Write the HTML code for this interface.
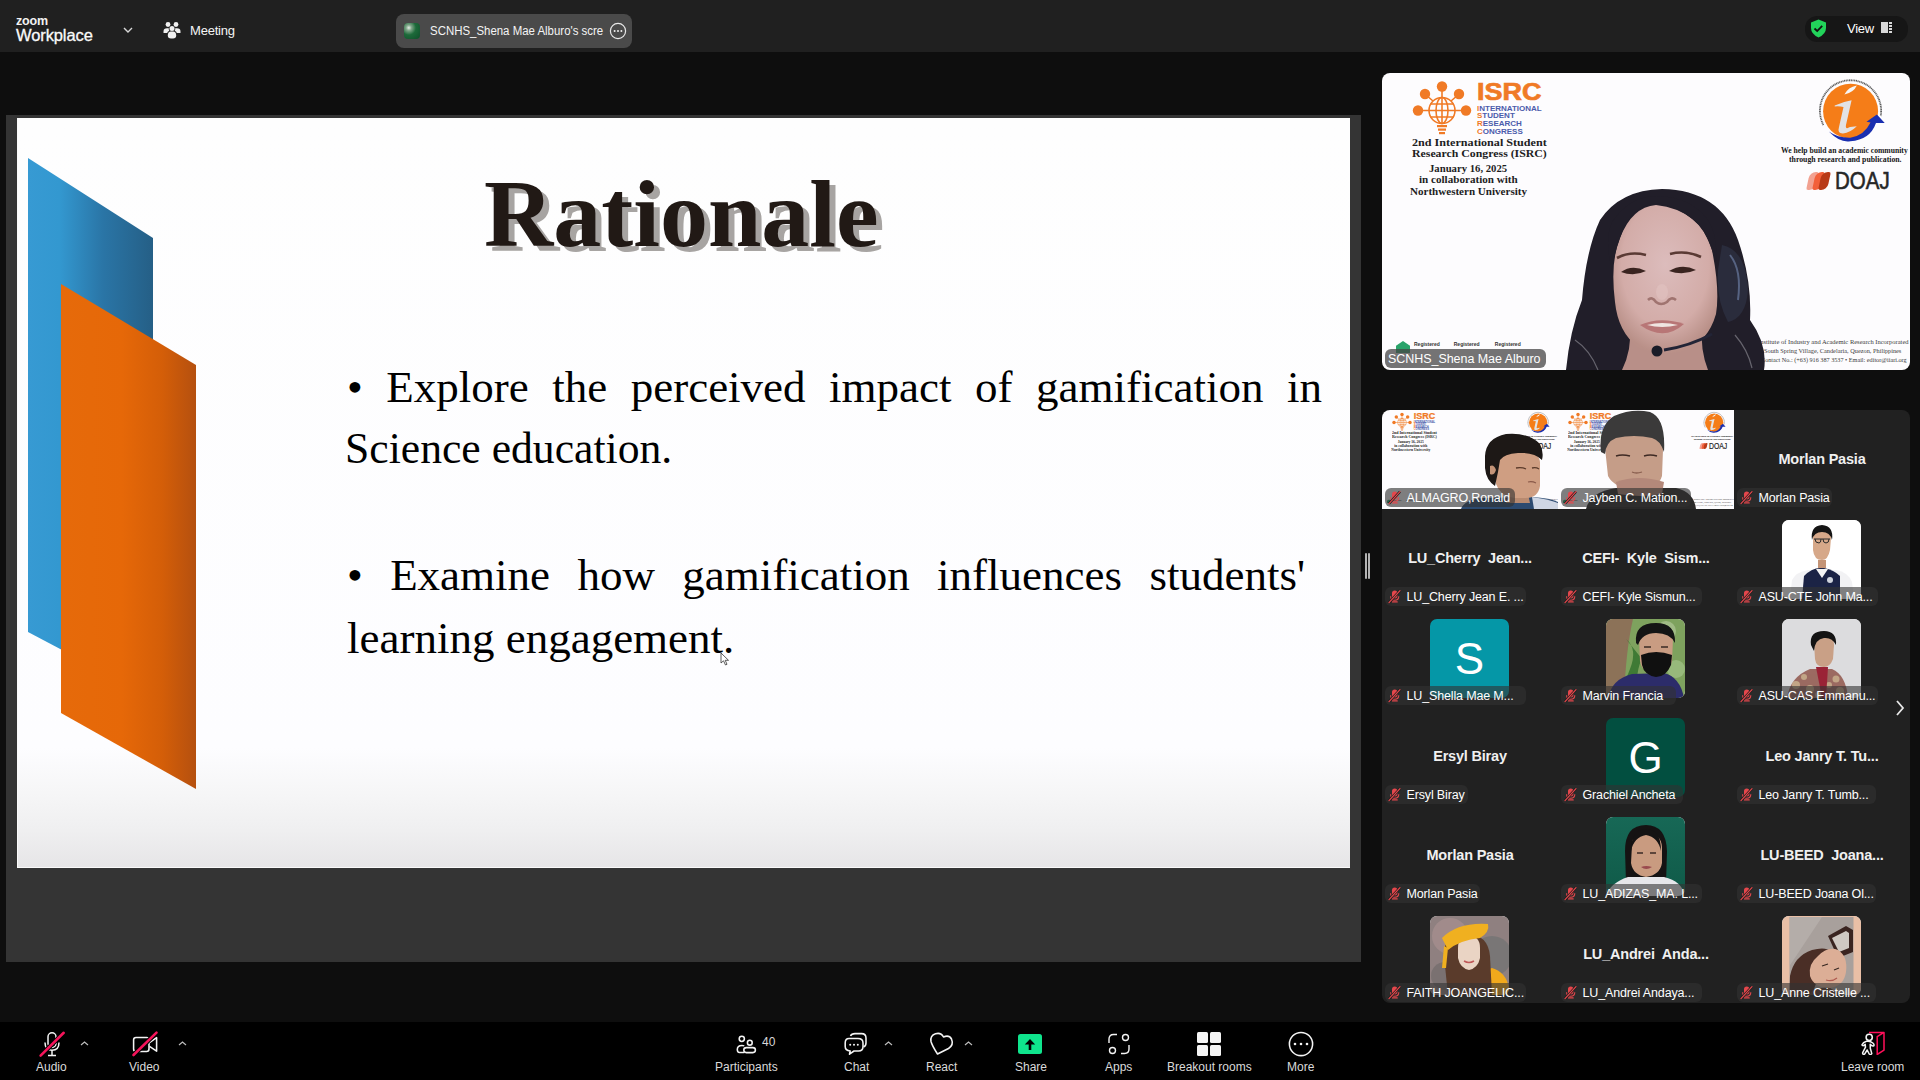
<!DOCTYPE html>
<html><head><meta charset="utf-8">
<style>
*{margin:0;padding:0;box-sizing:border-box}
html,body{width:1920px;height:1080px;overflow:hidden;background:#0e0e0e;font-family:"Liberation Sans",sans-serif;color:#fff}
.abs{position:absolute}
#top{left:0;top:0;width:1920px;height:52px;background:#202020}
#frame{left:6px;top:115px;width:1355px;height:847px;background:#343434}
#slide{left:17px;top:118px;width:1333px;height:750px;background:linear-gradient(to bottom,#fefefe 0%,#fdfdff 84%,#f6f6f7 90%,#efeff0 95%,#e6e5e7 100%);overflow:hidden;box-shadow:inset 0 -1px 0 #fafafa,inset 1px 0 0 #fafafa}
#spk{left:1382px;top:73px;width:528px;height:297px;background:#fdfcfe;border-radius:8px;overflow:hidden}
#grid{left:1382px;top:410px;width:528px;height:593px;background:#212121;border-radius:8px;overflow:hidden}
#bar{left:0;top:1022px;width:1920px;height:58px;background:#000}
.t1{left:467px;top:48px;font:bold 96px/96px "Liberation Serif",serif;color:#211915;text-shadow:6px 5px 0 #a7a4a2;white-space:nowrap}
.ln{left:330px;font:45px/45px "Liberation Serif",serif;color:#000;white-space:nowrap;text-align:justify;text-align-last:justify}
.l2{white-space:nowrap;text-align:left;text-align-last:left}
.ui{font-family:"Liberation Sans",sans-serif;color:#f4f4f4;line-height:16px;white-space:nowrap}
.lbl{top:38px;font:12px/14px "Liberation Sans",sans-serif;color:#dadada;white-space:nowrap}
/*gridcss*/.tile{width:176px;height:99px;overflow:hidden}
.bdsm{left:0;top:0;width:528px;height:297px;background:#fdfcfe;transform:scale(0.33333);transform-origin:0 0}
.nm{font:12.5px/16px "Liberation Sans",sans-serif;color:#fff;white-space:nowrap;letter-spacing:-0.15px}
.bn{left:0;top:39px;width:176px;text-align:center;font:bold 14.5px/20px "Liberation Sans",sans-serif;letter-spacing:-0.2px;color:#f0f0f0;white-space:nowrap}
.ph{left:48px;top:10.5px;width:79px;height:79px;border-radius:7px;overflow:hidden}
.av{left:0;top:0;width:79px;height:79px;text-align:center;font:44px/79px "Liberation Sans",sans-serif;color:#fff}
/*/gridcss*/</style></head>
<body>
<div id="top" class="abs">
<div class="abs" style="left:16px;top:14px;font:bold 12.5px/14px 'Liberation Sans',sans-serif;letter-spacing:-0.2px;color:#f2f2f2">zoom</div>
<div class="abs" style="left:16px;top:25px;font:16.5px/20px 'Liberation Sans',sans-serif;color:#fafafa;letter-spacing:-0.1px;-webkit-text-stroke:0.3px #fafafa">Workplace</div>
<svg class="abs" style="left:122px;top:25px" width="12" height="10" viewBox="0 0 12 10"><path d="M2 3 L6 7 L10 3" stroke="#d8d8d8" stroke-width="1.4" fill="none"/></svg>
<svg class="abs" style="left:162px;top:20px" width="20" height="20" viewBox="0 0 20 20" fill="#f0f0f0">
<circle cx="6" cy="4.5" r="2.4"/><circle cx="14" cy="4.5" r="2.4"/><circle cx="10" cy="8.6" r="2.5"/>
<path d="M1.5 11.5 Q1.5 8.2 5 8.2 L6.8 8.2 Q6.5 9.5 7.3 10.8 Q5.4 11.6 5.2 13 L1.5 13 Z"/>
<path d="M18.5 11.5 Q18.5 8.2 15 8.2 L13.2 8.2 Q13.5 9.5 12.7 10.8 Q14.6 11.6 14.8 13 L18.5 13 Z"/>
<path d="M5.8 15.5 Q5.8 11.6 9 11.6 L11 11.6 Q14.2 11.6 14.2 15.5 Q14.2 18.5 11 18.5 L9 18.5 Q5.8 18.5 5.8 15.5 Z"/>
</svg>
<div class="abs ui" style="left:190px;top:23px;font-size:13px;letter-spacing:-0.2px">Meeting</div>
<div class="abs" style="left:396px;top:14px;width:236px;height:34px;background:#4a4a4a;border-radius:8px">
<div class="abs" style="left:8px;top:9px;width:16px;height:16px;border-radius:4px;background:radial-gradient(circle at 30% 30%,#e8efe8 0,#7da487 18%,#1d6a3a 45%,#0f4f2a 100%)"></div>
<div class="abs ui" style="left:34px;top:9px;font-size:12.5px;transform:scaleX(0.915);transform-origin:0 0;white-space:nowrap">SCNHS_Shena Mae Alburo's scre</div>
<svg class="abs" style="left:213px;top:8px" width="18" height="18" viewBox="0 0 18 18"><circle cx="9" cy="9" r="7.6" stroke="#e8e8e8" stroke-width="1.2" fill="none"/><circle cx="5.6" cy="9" r="1" fill="#eee"/><circle cx="9" cy="9" r="1" fill="#eee"/><circle cx="12.4" cy="9" r="1" fill="#eee"/></svg>
</div>
<div class="abs" style="left:1805px;top:16px;width:103px;height:26px;background:#161616;border-radius:12px">
<svg class="abs" style="left:5px;top:3px" width="17" height="19" viewBox="0 0 17 19"><path d="M8.5 0.5 L16 3.5 L16 9 Q16 15 8.5 18.5 Q1 15 1 9 L1 3.5 Z" fill="#22d35a"/><path d="M4.5 9.5 L7.2 12 L12.2 6.8" stroke="#111" stroke-width="1.8" fill="none"/></svg>
<div class="abs ui" style="left:42px;top:5px;font-size:13px;letter-spacing:-0.3px;color:#fff">View</div>
<div class="abs" style="left:76px;top:6px;width:7px;height:11px;background:#d8d8d8"></div>
<div class="abs" style="left:84px;top:6px;width:3px;height:11px;background:repeating-linear-gradient(#d8d8d8 0 2px,#161616 2px 3px)"></div>
</div>
</div>
<div id="frame" class="abs"></div>
<div id="slide" class="abs">
<svg class="abs" style="left:0;top:0" width="1333" height="750" viewBox="0 0 1333 750">
<defs>
<linearGradient id="gb" x1="0" x2="1" y1="0" y2="0"><stop offset="0" stop-color="#379ad3"/><stop offset="0.25" stop-color="#3398d0"/><stop offset="0.6" stop-color="#2a75a6"/><stop offset="1" stop-color="#255f86"/></linearGradient>
<linearGradient id="go" x1="0" x2="1" y1="0" y2="0"><stop offset="0" stop-color="#e66a0a"/><stop offset="0.45" stop-color="#e66808"/><stop offset="0.75" stop-color="#d45e08"/><stop offset="1" stop-color="#b5500f"/></linearGradient>
</defs>
<polygon points="11,40 136,120 136,580 11,514" fill="url(#gb)"/>
<polygon points="44,166 179,247 179,671 44,595" fill="url(#go)"/>
</svg>
<div class="abs t1">Rationale</div>
<div class="abs ln" style="top:247px;width:975px">&bull; Explore the perceived impact of gamification in</div>
<div class="abs ln l2" style="top:308px;left:328px;transform:scaleX(0.97);transform-origin:0 0">Science education.</div>
<div class="abs ln" style="top:435px;width:958px">&bull; Examine how gamification influences students'</div>
<div class="abs ln l2" style="top:498px">learning engagement.</div>
</div>
<div class="abs" style="left:1365px;top:553px;width:1.6px;height:26px;background:#b4b4b4;border-radius:1px"></div>
<div class="abs" style="left:1368px;top:553px;width:1.6px;height:26px;background:#b4b4b4;border-radius:1px"></div>
<svg class="abs" style="left:720px;top:652px" width="10" height="14" viewBox="0 0 10 14"><path d="M1 1 L1 11 L3.5 8.8 L5.5 13 L7 12.3 L5.2 8.3 L8.5 8.3 Z" fill="#fff" stroke="#333" stroke-width="0.8"/></svg>
<div id="spk" class="abs"><svg class="abs" style="left:29px;top:7px" width="62" height="56" viewBox="0 0 62 56">
<g stroke="#f07a26" stroke-width="1.6" fill="none">
<circle cx="31" cy="30.5" r="13"/>
<ellipse cx="31" cy="30.5" rx="6" ry="13"/>
<path d="M31 17.5 L31 43.5 M18 30.5 L44 30.5 M19.5 24 L42.5 24 M19.5 37 L42.5 37"/>
<path d="M31 17.5 L31 8 M22 21 L15 15 M40 21 L47 15 M18 30.5 L8 30.5 M44 30.5 L54 30.5"/>
</g>
<g fill="#f07a26">
<circle cx="31" cy="6.5" r="5.2"/><circle cx="14" cy="14" r="5.2"/><circle cx="48" cy="14" r="5.2"/>
<circle cx="7" cy="30.5" r="5.2"/><circle cx="55" cy="30.5" r="5.2"/>
<rect x="26" y="45" width="10" height="2.2"/><rect x="27" y="48.5" width="8" height="2.2"/><rect x="28" y="52" width="6" height="2.2"/>
</g></svg><div class="abs" style="left:94.5px;top:7.3px;font:bold 24.5px/24px 'Liberation Sans',sans-serif;color:#f07a26;-webkit-text-stroke:0.7px #f07a26;transform:scaleX(1.1);transform-origin:0 0">ISRC</div><div class="abs" style="left:95px;top:31.5px;font:bold 8px/8px 'Liberation Sans',sans-serif;color:#4b5bab;white-space:nowrap"><span style="color:#f07a26">I</span>NTERNATIONAL</div><div class="abs" style="left:95px;top:39.2px;font:bold 8px/8px 'Liberation Sans',sans-serif;color:#4b5bab;white-space:nowrap"><span style="color:#f07a26">S</span>TUDENT</div><div class="abs" style="left:95px;top:46.9px;font:bold 8px/8px 'Liberation Sans',sans-serif;color:#4b5bab;white-space:nowrap"><span style="color:#f07a26">R</span>ESEARCH</div><div class="abs" style="left:95px;top:54.6px;font:bold 8px/8px 'Liberation Sans',sans-serif;color:#4b5bab;white-space:nowrap"><span style="color:#f07a26">C</span>ONGRESS</div><div class="abs" style="left:29.5px;top:65px;font:bold 10.2px/10.2px 'Liberation Serif',serif;color:#1e1e1e;white-space:nowrap;transform:scaleX(1.19);transform-origin:0 0">2nd International Student</div><div class="abs" style="left:30px;top:76px;font:bold 10.2px/10.2px 'Liberation Serif',serif;color:#1e1e1e;white-space:nowrap;transform:scaleX(1.16);transform-origin:0 0">Research Congress (ISRC)</div><div class="abs" style="left:46.5px;top:91px;font:bold 10.2px/10.2px 'Liberation Serif',serif;color:#1e1e1e;white-space:nowrap;transform:scaleX(1.05);transform-origin:0 0">January 16, 2025</div><div class="abs" style="left:36.5px;top:102px;font:bold 10.2px/10.2px 'Liberation Serif',serif;color:#1e1e1e;white-space:nowrap;transform:scaleX(1.09);transform-origin:0 0">in collaboration with</div><div class="abs" style="left:27.5px;top:113.8px;font:bold 10.2px/10.2px 'Liberation Serif',serif;color:#1e1e1e;white-space:nowrap;transform:scaleX(1.085);transform-origin:0 0">Northwestern University</div><svg class="abs" style="left:428px;top:2px" width="90" height="76" viewBox="0 0 90 76">
<path d="M13.4 50 A30.6 30.6 0 1 1 70.7 41" stroke="#5a5a5a" stroke-width="1.8" stroke-dasharray="1.1 0.6" fill="none"/>
<circle cx="40.6" cy="36.2" r="27.5" fill="#f57d18"/>
<path d="M18.8 56.5 Q30 68 40.3 66.2 Q60 65 66 48 L74.7 48 L66.9 39.6 L56.5 46.8 L60.5 47.6 Q54 61 40.3 62.7 Q28 63 18.8 56.5 Z" fill="#1a2fb0"/>
<path d="M24.7 30.5 Q32 27 41.6 25.3 L36 50 Q35 55 40 52 L46.8 51.3 Q40 58 33 58.4 Q27 58.6 29 52 L33.5 32 Q29 31 24.7 31.5 Z" fill="#e2e2e4"/>
<path d="M34.4 19.5 Q38 12 46.8 10.4 Q44 17 34.4 19.5 Z" fill="#f6f6f6"/>
</svg><div class="abs" style="left:399px;top:74px;font:bold 8px/8px 'Liberation Serif',serif;color:#161616;white-space:nowrap;transform:scaleX(0.955);transform-origin:0 0">We help build an academic community</div><div class="abs" style="left:406.5px;top:83px;font:bold 8px/8px 'Liberation Serif',serif;color:#161616;white-space:nowrap;transform:scaleX(0.97);transform-origin:0 0">through research and publication.</div><div class="abs" style="left:425.7px;top:99px;width:22px;height:18px">
<div class="abs" style="left:0;top:0;width:9px;height:18px;background:#f2a191;border-radius:6px 2px 6px 2px;transform:skewX(-12deg)"></div>
<div class="abs" style="left:6px;top:0;width:9px;height:18px;background:#f25f3a;border-radius:6px 2px 6px 2px;transform:skewX(-12deg)"></div>
<div class="abs" style="left:12px;top:0;width:9px;height:18px;background:#b83a18;border-radius:6px 2px 6px 2px;transform:skewX(-12deg)"></div>
</div>
<div class="abs" style="left:453px;top:95px;font:24.4px/26px 'Liberation Sans',sans-serif;color:#262626;-webkit-text-stroke:0.6px #262626;transform:scaleX(0.84);transform-origin:0 0">DOAJ</div><div class="abs" style="left:376px;top:264.5px;font:6.5px/7px 'Liberation Serif',serif;color:#3a3a3a;white-space:nowrap">Institute of Industry and Academic Research Incorporated</div><div class="abs" style="left:382px;top:273.5px;font:6.3px/7px 'Liberation Serif',serif;color:#3a3a3a;white-space:nowrap">South Spring Village, Candelaria, Quezon, Philippines</div><div class="abs" style="left:379px;top:282.5px;font:6.2px/7px 'Liberation Serif',serif;color:#3a3a3a;white-space:nowrap">Contact No.: (+63) 916 387 3537 &bull; Email: editor@iiari.org</div><div class="abs" style="left:14px;top:268px;width:14px;height:12px;background:#2aa36a;clip-path:polygon(50% 0,100% 40%,100% 100%,0 100%,0 40%)"></div>
<div class="abs" style="left:32px;top:269px;font:bold 5px/5px 'Liberation Sans',sans-serif;color:#333;white-space:nowrap">Registered&nbsp;&nbsp;&nbsp;&nbsp;&nbsp;&nbsp;&nbsp;&nbsp;&nbsp;&nbsp;Registered&nbsp;&nbsp;&nbsp;&nbsp;&nbsp;&nbsp;&nbsp;&nbsp;&nbsp;&nbsp;&nbsp;Registered</div><svg class="abs" style="left:0;top:0" width="528" height="297" viewBox="1382 73 528 297">
<defs>
<radialGradient id="skin" cx="0.5" cy="0.4" r="0.6"><stop offset="0" stop-color="#dcbcbc"/><stop offset="0.7" stop-color="#d3aca8"/><stop offset="1" stop-color="#b99088"/></radialGradient>
</defs>
<!-- hair back mass -->
<path d="M1662 189 Q1720 190 1738 240 Q1752 280 1750 320 Q1768 345 1764 370 L1566 370 Q1570 330 1582 300 Q1586 250 1600 220 Q1620 190 1662 189 Z" fill="#211e29"/>
<!-- neck -->
<path d="M1630 325 L1702 325 Q1700 350 1708 370 L1622 370 Q1632 350 1630 325 Z" fill="#b88f88"/>
<!-- face -->
<path d="M1656 205 Q1700 210 1712 250 Q1720 290 1716 314 Q1708 342 1684 351 Q1660 357 1638 347 Q1618 332 1615 302 Q1610 262 1620 238 Q1632 207 1656 205 Z" fill="url(#skin)"/>
<!-- hair front fringe over forehead sides -->
<path d="M1656 203 Q1630 206 1620 238 Q1614 255 1612 270 Q1604 240 1612 222 Q1630 196 1656 196 Q1690 196 1708 220 Q1718 236 1716 262 Q1708 236 1700 226 Q1680 206 1656 203 Z" fill="#211e29"/>
<!-- headset right -->
<path d="M1722 245 Q1746 250 1748 290 Q1746 318 1728 322 Q1716 300 1718 270 Z" fill="#2a2c3c"/>
<path d="M1730 255 Q1742 270 1738 300" stroke="#6a7aa0" stroke-width="2" fill="none" opacity="0.7"/>
<!-- brows -->
<path d="M1617 258 Q1630 251 1646 255" stroke="#5a3a34" stroke-width="2.6" fill="none"/>
<path d="M1670 254 Q1686 250 1701 257" stroke="#5a3a34" stroke-width="2.6" fill="none"/>
<!-- eyes -->
<path d="M1621 272 Q1632 264 1646 271 Q1634 277 1621 272 Z" fill="#3a2420"/>
<path d="M1669 271 Q1682 263 1696 270 Q1683 276 1669 271 Z" fill="#3a2420"/>
<!-- nose -->
<path d="M1648 300 Q1652 296 1656 302 Q1661 306 1667 302 Q1671 296 1676 300" stroke="#a07470" stroke-width="2.6" fill="none"/><ellipse cx="1662" cy="292" rx="6" ry="8" fill="#e4c6c4" opacity="0.5"/>
<!-- mouth -->
<path d="M1640 325 Q1660 316 1684 324 Q1664 342 1640 325 Z" fill="#b87676"/>
<path d="M1647 325 Q1662 321 1678 325 Q1662 329 1647 325 Z" fill="#efe4e0"/>
<!-- mic -->
<path d="M1664 350 Q1690 346 1712 334" stroke="#222436" stroke-width="3" fill="none"/>
<circle cx="1657" cy="351" r="5.5" fill="#1a1c28"/>
<!-- hair strands highlights bottom -->
<path d="M1575 340 Q1590 350 1598 370" stroke="#e8e8ef" stroke-width="1.2" fill="none" opacity="0.35"/>
<path d="M1735 335 Q1748 350 1752 368" stroke="#e8e8ef" stroke-width="1.2" fill="none" opacity="0.35"/>
</svg><div class="abs" style="left:3px;top:275.5px;width:161px;height:19.5px;border-radius:6px;background:rgba(70,70,70,0.75)"></div>
<div class="abs nm" style="left:6px;top:277.5px;letter-spacing:-0.05px">SCNHS_Shena Mae Alburo</div></div><!--/spk-->
<div id="grid" class="abs"><div class="abs tile" style="left:0px;top:0px"><div class="abs bdsm"><svg class="abs" style="left:29px;top:7px" width="62" height="56" viewBox="0 0 62 56">
<g stroke="#f07a26" stroke-width="1.6" fill="none">
<circle cx="31" cy="30.5" r="13"/>
<ellipse cx="31" cy="30.5" rx="6" ry="13"/>
<path d="M31 17.5 L31 43.5 M18 30.5 L44 30.5 M19.5 24 L42.5 24 M19.5 37 L42.5 37"/>
<path d="M31 17.5 L31 8 M22 21 L15 15 M40 21 L47 15 M18 30.5 L8 30.5 M44 30.5 L54 30.5"/>
</g>
<g fill="#f07a26">
<circle cx="31" cy="6.5" r="5.2"/><circle cx="14" cy="14" r="5.2"/><circle cx="48" cy="14" r="5.2"/>
<circle cx="7" cy="30.5" r="5.2"/><circle cx="55" cy="30.5" r="5.2"/>
<rect x="26" y="45" width="10" height="2.2"/><rect x="27" y="48.5" width="8" height="2.2"/><rect x="28" y="52" width="6" height="2.2"/>
</g></svg><div class="abs" style="left:94.5px;top:7.3px;font:bold 24.5px/24px 'Liberation Sans',sans-serif;color:#f07a26;-webkit-text-stroke:0.7px #f07a26;transform:scaleX(1.1);transform-origin:0 0">ISRC</div><div class="abs" style="left:95px;top:31.5px;font:bold 8px/8px 'Liberation Sans',sans-serif;color:#4b5bab;white-space:nowrap"><span style="color:#f07a26">I</span>NTERNATIONAL</div><div class="abs" style="left:95px;top:39.2px;font:bold 8px/8px 'Liberation Sans',sans-serif;color:#4b5bab;white-space:nowrap"><span style="color:#f07a26">S</span>TUDENT</div><div class="abs" style="left:95px;top:46.9px;font:bold 8px/8px 'Liberation Sans',sans-serif;color:#4b5bab;white-space:nowrap"><span style="color:#f07a26">R</span>ESEARCH</div><div class="abs" style="left:95px;top:54.6px;font:bold 8px/8px 'Liberation Sans',sans-serif;color:#4b5bab;white-space:nowrap"><span style="color:#f07a26">C</span>ONGRESS</div><div class="abs" style="left:29.5px;top:65px;font:bold 10.2px/10.2px 'Liberation Serif',serif;color:#1e1e1e;white-space:nowrap;transform:scaleX(1.19);transform-origin:0 0">2nd International Student</div><div class="abs" style="left:30px;top:76px;font:bold 10.2px/10.2px 'Liberation Serif',serif;color:#1e1e1e;white-space:nowrap;transform:scaleX(1.16);transform-origin:0 0">Research Congress (ISRC)</div><div class="abs" style="left:46.5px;top:91px;font:bold 10.2px/10.2px 'Liberation Serif',serif;color:#1e1e1e;white-space:nowrap;transform:scaleX(1.05);transform-origin:0 0">January 16, 2025</div><div class="abs" style="left:36.5px;top:102px;font:bold 10.2px/10.2px 'Liberation Serif',serif;color:#1e1e1e;white-space:nowrap;transform:scaleX(1.09);transform-origin:0 0">in collaboration with</div><div class="abs" style="left:27.5px;top:113.8px;font:bold 10.2px/10.2px 'Liberation Serif',serif;color:#1e1e1e;white-space:nowrap;transform:scaleX(1.085);transform-origin:0 0">Northwestern University</div><svg class="abs" style="left:428px;top:2px" width="90" height="76" viewBox="0 0 90 76">
<path d="M13.4 50 A30.6 30.6 0 1 1 70.7 41" stroke="#5a5a5a" stroke-width="1.8" stroke-dasharray="1.1 0.6" fill="none"/>
<circle cx="40.6" cy="36.2" r="27.5" fill="#f57d18"/>
<path d="M18.8 56.5 Q30 68 40.3 66.2 Q60 65 66 48 L74.7 48 L66.9 39.6 L56.5 46.8 L60.5 47.6 Q54 61 40.3 62.7 Q28 63 18.8 56.5 Z" fill="#1a2fb0"/>
<path d="M24.7 30.5 Q32 27 41.6 25.3 L36 50 Q35 55 40 52 L46.8 51.3 Q40 58 33 58.4 Q27 58.6 29 52 L33.5 32 Q29 31 24.7 31.5 Z" fill="#e2e2e4"/>
<path d="M34.4 19.5 Q38 12 46.8 10.4 Q44 17 34.4 19.5 Z" fill="#f6f6f6"/>
</svg><div class="abs" style="left:399px;top:74px;font:bold 8px/8px 'Liberation Serif',serif;color:#161616;white-space:nowrap;transform:scaleX(0.955);transform-origin:0 0">We help build an academic community</div><div class="abs" style="left:406.5px;top:83px;font:bold 8px/8px 'Liberation Serif',serif;color:#161616;white-space:nowrap;transform:scaleX(0.97);transform-origin:0 0">through research and publication.</div><div class="abs" style="left:425.7px;top:99px;width:22px;height:18px">
<div class="abs" style="left:0;top:0;width:9px;height:18px;background:#f2a191;border-radius:6px 2px 6px 2px;transform:skewX(-12deg)"></div>
<div class="abs" style="left:6px;top:0;width:9px;height:18px;background:#f25f3a;border-radius:6px 2px 6px 2px;transform:skewX(-12deg)"></div>
<div class="abs" style="left:12px;top:0;width:9px;height:18px;background:#b83a18;border-radius:6px 2px 6px 2px;transform:skewX(-12deg)"></div>
</div>
<div class="abs" style="left:453px;top:95px;font:24.4px/26px 'Liberation Sans',sans-serif;color:#262626;-webkit-text-stroke:0.6px #262626;transform:scaleX(0.84);transform-origin:0 0">DOAJ</div><div class="abs" style="left:376px;top:264.5px;font:6.5px/7px 'Liberation Serif',serif;color:#3a3a3a;white-space:nowrap">Institute of Industry and Academic Research Incorporated</div><div class="abs" style="left:382px;top:273.5px;font:6.3px/7px 'Liberation Serif',serif;color:#3a3a3a;white-space:nowrap">South Spring Village, Candelaria, Quezon, Philippines</div><div class="abs" style="left:379px;top:282.5px;font:6.2px/7px 'Liberation Serif',serif;color:#3a3a3a;white-space:nowrap">Contact No.: (+63) 916 387 3537 &bull; Email: editor@iiari.org</div><div class="abs" style="left:14px;top:268px;width:14px;height:12px;background:#2aa36a;clip-path:polygon(50% 0,100% 40%,100% 100%,0 100%,0 40%)"></div>
<div class="abs" style="left:32px;top:269px;font:bold 5px/5px 'Liberation Sans',sans-serif;color:#333;white-space:nowrap">Registered&nbsp;&nbsp;&nbsp;&nbsp;&nbsp;&nbsp;&nbsp;&nbsp;&nbsp;&nbsp;Registered&nbsp;&nbsp;&nbsp;&nbsp;&nbsp;&nbsp;&nbsp;&nbsp;&nbsp;&nbsp;&nbsp;Registered</div></div><svg class="abs" style="left:0;top:0" width="176" height="99" viewBox="0 0 176 99">
<path d="M79 99 Q82 90 100 88 L150 87 Q168 88 176 92 L176 99 Z" fill="#2c4a70"/>
<path d="M150 87 Q166 89 176 93 L176 99 L152 99 Z" fill="#cfd6e4"/>
<path d="M126 84 L146 84 L148 93 L124 93 Z" fill="#b88a70"/>
<path d="M113 52 Q113 40 130 39 Q156 38 158 52 L158 76 Q156 88 144 88 L132 88 Q118 86 114 74 Z" fill="#cf9e82"/>
<path d="M103 46 Q104 28 124 24 Q146 22 158 34 Q162 42 160 50 Q152 42 136 43 Q122 44 118 50 L116 62 L113 76 Q104 70 103 58 Z" fill="#1d1816"/>
<path d="M108 56 Q112 54 114 60 Q112 66 108 64 Z" fill="#c49478"/>
<path d="M134 58 Q140 57 144 59 M150 58 Q154 57 157 59" stroke="#5a3a2a" stroke-width="1.3" fill="none"/>
<path d="M146 72 Q150 71 154 73" stroke="#8a5a4a" stroke-width="1.1" fill="none"/>
</svg><div class="abs" style="left:3px;top:77.5px;width:130px;height:19.5px;border-radius:6px;background:rgba(48,48,48,0.62)">
<svg class="abs" style="left:2px;top:2.5px" width="15" height="15" viewBox="0 0 15 15">
<rect x="5" y="1.5" width="5.4" height="8" rx="2.7" fill="#e5474c"/>
<path d="M3.6 7.2 Q3.6 11.2 7.7 11.2 Q11.8 11.2 11.8 7.2" stroke="#e5474c" stroke-width="1.1" fill="none"/>
<rect x="4.8" y="12.2" width="6" height="1.4" rx="0.7" fill="#e5474c"/>
<path d="M2 13.6 L13 1.6" stroke="#1c1c1c" stroke-width="2.4"/>
<path d="M2 13.6 L13 1.6" stroke="#e5474c" stroke-width="1.2" stroke-linecap="round"/>
</svg>
<div class="abs nm" style="left:21.5px;top:2px">ALMAGRO,Ronald</div>
</div></div><div class="abs tile" style="left:176px;top:0px"><div class="abs bdsm"><svg class="abs" style="left:29px;top:7px" width="62" height="56" viewBox="0 0 62 56">
<g stroke="#f07a26" stroke-width="1.6" fill="none">
<circle cx="31" cy="30.5" r="13"/>
<ellipse cx="31" cy="30.5" rx="6" ry="13"/>
<path d="M31 17.5 L31 43.5 M18 30.5 L44 30.5 M19.5 24 L42.5 24 M19.5 37 L42.5 37"/>
<path d="M31 17.5 L31 8 M22 21 L15 15 M40 21 L47 15 M18 30.5 L8 30.5 M44 30.5 L54 30.5"/>
</g>
<g fill="#f07a26">
<circle cx="31" cy="6.5" r="5.2"/><circle cx="14" cy="14" r="5.2"/><circle cx="48" cy="14" r="5.2"/>
<circle cx="7" cy="30.5" r="5.2"/><circle cx="55" cy="30.5" r="5.2"/>
<rect x="26" y="45" width="10" height="2.2"/><rect x="27" y="48.5" width="8" height="2.2"/><rect x="28" y="52" width="6" height="2.2"/>
</g></svg><div class="abs" style="left:94.5px;top:7.3px;font:bold 24.5px/24px 'Liberation Sans',sans-serif;color:#f07a26;-webkit-text-stroke:0.7px #f07a26;transform:scaleX(1.1);transform-origin:0 0">ISRC</div><div class="abs" style="left:95px;top:31.5px;font:bold 8px/8px 'Liberation Sans',sans-serif;color:#4b5bab;white-space:nowrap"><span style="color:#f07a26">I</span>NTERNATIONAL</div><div class="abs" style="left:95px;top:39.2px;font:bold 8px/8px 'Liberation Sans',sans-serif;color:#4b5bab;white-space:nowrap"><span style="color:#f07a26">S</span>TUDENT</div><div class="abs" style="left:95px;top:46.9px;font:bold 8px/8px 'Liberation Sans',sans-serif;color:#4b5bab;white-space:nowrap"><span style="color:#f07a26">R</span>ESEARCH</div><div class="abs" style="left:95px;top:54.6px;font:bold 8px/8px 'Liberation Sans',sans-serif;color:#4b5bab;white-space:nowrap"><span style="color:#f07a26">C</span>ONGRESS</div><div class="abs" style="left:29.5px;top:65px;font:bold 10.2px/10.2px 'Liberation Serif',serif;color:#1e1e1e;white-space:nowrap;transform:scaleX(1.19);transform-origin:0 0">2nd International Student</div><div class="abs" style="left:30px;top:76px;font:bold 10.2px/10.2px 'Liberation Serif',serif;color:#1e1e1e;white-space:nowrap;transform:scaleX(1.16);transform-origin:0 0">Research Congress (ISRC)</div><div class="abs" style="left:46.5px;top:91px;font:bold 10.2px/10.2px 'Liberation Serif',serif;color:#1e1e1e;white-space:nowrap;transform:scaleX(1.05);transform-origin:0 0">January 16, 2025</div><div class="abs" style="left:36.5px;top:102px;font:bold 10.2px/10.2px 'Liberation Serif',serif;color:#1e1e1e;white-space:nowrap;transform:scaleX(1.09);transform-origin:0 0">in collaboration with</div><div class="abs" style="left:27.5px;top:113.8px;font:bold 10.2px/10.2px 'Liberation Serif',serif;color:#1e1e1e;white-space:nowrap;transform:scaleX(1.085);transform-origin:0 0">Northwestern University</div><svg class="abs" style="left:428px;top:2px" width="90" height="76" viewBox="0 0 90 76">
<path d="M13.4 50 A30.6 30.6 0 1 1 70.7 41" stroke="#5a5a5a" stroke-width="1.8" stroke-dasharray="1.1 0.6" fill="none"/>
<circle cx="40.6" cy="36.2" r="27.5" fill="#f57d18"/>
<path d="M18.8 56.5 Q30 68 40.3 66.2 Q60 65 66 48 L74.7 48 L66.9 39.6 L56.5 46.8 L60.5 47.6 Q54 61 40.3 62.7 Q28 63 18.8 56.5 Z" fill="#1a2fb0"/>
<path d="M24.7 30.5 Q32 27 41.6 25.3 L36 50 Q35 55 40 52 L46.8 51.3 Q40 58 33 58.4 Q27 58.6 29 52 L33.5 32 Q29 31 24.7 31.5 Z" fill="#e2e2e4"/>
<path d="M34.4 19.5 Q38 12 46.8 10.4 Q44 17 34.4 19.5 Z" fill="#f6f6f6"/>
</svg><div class="abs" style="left:399px;top:74px;font:bold 8px/8px 'Liberation Serif',serif;color:#161616;white-space:nowrap;transform:scaleX(0.955);transform-origin:0 0">We help build an academic community</div><div class="abs" style="left:406.5px;top:83px;font:bold 8px/8px 'Liberation Serif',serif;color:#161616;white-space:nowrap;transform:scaleX(0.97);transform-origin:0 0">through research and publication.</div><div class="abs" style="left:425.7px;top:99px;width:22px;height:18px">
<div class="abs" style="left:0;top:0;width:9px;height:18px;background:#f2a191;border-radius:6px 2px 6px 2px;transform:skewX(-12deg)"></div>
<div class="abs" style="left:6px;top:0;width:9px;height:18px;background:#f25f3a;border-radius:6px 2px 6px 2px;transform:skewX(-12deg)"></div>
<div class="abs" style="left:12px;top:0;width:9px;height:18px;background:#b83a18;border-radius:6px 2px 6px 2px;transform:skewX(-12deg)"></div>
</div>
<div class="abs" style="left:453px;top:95px;font:24.4px/26px 'Liberation Sans',sans-serif;color:#262626;-webkit-text-stroke:0.6px #262626;transform:scaleX(0.84);transform-origin:0 0">DOAJ</div><div class="abs" style="left:376px;top:264.5px;font:6.5px/7px 'Liberation Serif',serif;color:#3a3a3a;white-space:nowrap">Institute of Industry and Academic Research Incorporated</div><div class="abs" style="left:382px;top:273.5px;font:6.3px/7px 'Liberation Serif',serif;color:#3a3a3a;white-space:nowrap">South Spring Village, Candelaria, Quezon, Philippines</div><div class="abs" style="left:379px;top:282.5px;font:6.2px/7px 'Liberation Serif',serif;color:#3a3a3a;white-space:nowrap">Contact No.: (+63) 916 387 3537 &bull; Email: editor@iiari.org</div><div class="abs" style="left:14px;top:268px;width:14px;height:12px;background:#2aa36a;clip-path:polygon(50% 0,100% 40%,100% 100%,0 100%,0 40%)"></div>
<div class="abs" style="left:32px;top:269px;font:bold 5px/5px 'Liberation Sans',sans-serif;color:#333;white-space:nowrap">Registered&nbsp;&nbsp;&nbsp;&nbsp;&nbsp;&nbsp;&nbsp;&nbsp;&nbsp;&nbsp;Registered&nbsp;&nbsp;&nbsp;&nbsp;&nbsp;&nbsp;&nbsp;&nbsp;&nbsp;&nbsp;&nbsp;Registered</div></div><svg class="abs" style="left:0;top:0" width="176" height="99" viewBox="0 0 176 99">
<path d="M28 99 Q32 82 58 78 L118 78 Q136 82 138 99 Z" fill="#2a2929"/>
<path d="M47 38 Q47 26 60 22 Q80 18 98 22 Q106 28 105 40 L104 66 Q100 80 78 80 Q56 78 50 66 Z" fill="#c59d88"/>
<path d="M43 42 Q40 16 56 6 Q74 -2 92 2 Q108 8 106 42 Q102 30 94 28 Q76 24 58 28 Q48 32 47 44 Z" fill="#3b3a3a"/>
<path d="M58 72 Q80 64 106 72 L104 84 Q84 88 60 84 Z" fill="#b4887a"/>
<path d="M58 46 Q64 44 72 46 M86 46 Q92 44 99 46" stroke="#3e2a24" stroke-width="1.6" fill="none"/>
<path d="M74 62 Q78 64 84 62" stroke="#8a6050" stroke-width="1.3" fill="none"/>
</svg><div class="abs" style="left:3px;top:77.5px;width:130px;height:19.5px;border-radius:6px;background:rgba(48,48,48,0.62)">
<svg class="abs" style="left:2px;top:2.5px" width="15" height="15" viewBox="0 0 15 15">
<rect x="5" y="1.5" width="5.4" height="8" rx="2.7" fill="#e5474c"/>
<path d="M3.6 7.2 Q3.6 11.2 7.7 11.2 Q11.8 11.2 11.8 7.2" stroke="#e5474c" stroke-width="1.1" fill="none"/>
<rect x="4.8" y="12.2" width="6" height="1.4" rx="0.7" fill="#e5474c"/>
<path d="M2 13.6 L13 1.6" stroke="#1c1c1c" stroke-width="2.4"/>
<path d="M2 13.6 L13 1.6" stroke="#e5474c" stroke-width="1.2" stroke-linecap="round"/>
</svg>
<div class="abs nm" style="left:21.5px;top:2px">Jayben C. Mation...</div>
</div></div><div class="abs tile" style="left:352px;top:0px"><div class="abs bn">Morlan Pasia</div><div class="abs" style="left:3px;top:77.5px;width:95px;height:19.5px;border-radius:6px;background:rgba(50,50,50,0.6)">
<svg class="abs" style="left:2px;top:2.5px" width="15" height="15" viewBox="0 0 15 15">
<rect x="5" y="1.5" width="5.4" height="8" rx="2.7" fill="#e5474c"/>
<path d="M3.6 7.2 Q3.6 11.2 7.7 11.2 Q11.8 11.2 11.8 7.2" stroke="#e5474c" stroke-width="1.1" fill="none"/>
<rect x="4.8" y="12.2" width="6" height="1.4" rx="0.7" fill="#e5474c"/>
<path d="M2 13.6 L13 1.6" stroke="#1c1c1c" stroke-width="2.4"/>
<path d="M2 13.6 L13 1.6" stroke="#e5474c" stroke-width="1.2" stroke-linecap="round"/>
</svg>
<div class="abs nm" style="left:21.5px;top:2px">Morlan Pasia</div>
</div></div><div class="abs tile" style="left:0px;top:99px"><div class="abs bn">LU_Cherry&nbsp; Jean...</div><div class="abs" style="left:3px;top:77.5px;width:141px;height:19.5px;border-radius:6px;background:rgba(50,50,50,0.6)">
<svg class="abs" style="left:2px;top:2.5px" width="15" height="15" viewBox="0 0 15 15">
<rect x="5" y="1.5" width="5.4" height="8" rx="2.7" fill="#e5474c"/>
<path d="M3.6 7.2 Q3.6 11.2 7.7 11.2 Q11.8 11.2 11.8 7.2" stroke="#e5474c" stroke-width="1.1" fill="none"/>
<rect x="4.8" y="12.2" width="6" height="1.4" rx="0.7" fill="#e5474c"/>
<path d="M2 13.6 L13 1.6" stroke="#1c1c1c" stroke-width="2.4"/>
<path d="M2 13.6 L13 1.6" stroke="#e5474c" stroke-width="1.2" stroke-linecap="round"/>
</svg>
<div class="abs nm" style="left:21.5px;top:2px">LU_Cherry Jean E. ...</div>
</div></div><div class="abs tile" style="left:176px;top:99px"><div class="abs bn">CEFI-&nbsp; Kyle&nbsp; Sism...</div><div class="abs" style="left:3px;top:77.5px;width:141px;height:19.5px;border-radius:6px;background:rgba(50,50,50,0.6)">
<svg class="abs" style="left:2px;top:2.5px" width="15" height="15" viewBox="0 0 15 15">
<rect x="5" y="1.5" width="5.4" height="8" rx="2.7" fill="#e5474c"/>
<path d="M3.6 7.2 Q3.6 11.2 7.7 11.2 Q11.8 11.2 11.8 7.2" stroke="#e5474c" stroke-width="1.1" fill="none"/>
<rect x="4.8" y="12.2" width="6" height="1.4" rx="0.7" fill="#e5474c"/>
<path d="M2 13.6 L13 1.6" stroke="#1c1c1c" stroke-width="2.4"/>
<path d="M2 13.6 L13 1.6" stroke="#e5474c" stroke-width="1.2" stroke-linecap="round"/>
</svg>
<div class="abs nm" style="left:21.5px;top:2px">CEFI- Kyle Sismun...</div>
</div></div><div class="abs tile" style="left:352px;top:99px"><div class="abs ph" style="background:#fff"><svg width="79" height="79" viewBox="0 0 79 79">
<rect width="79" height="79" fill="#ffffff"/>
<path d="M8 79 L10 60 Q14 52 26 50 L54 50 Q66 52 70 62 L72 79 Z" fill="#f2f2f4"/>
<path d="M20 79 L22 56 Q30 48 38 48 L42 48 Q52 50 58 56 L58 79 Z" fill="#1b2345"/>
<path d="M34 49 L40 58 L46 49 Z" fill="#f4f4f4"/>
<circle cx="48" cy="60" r="3" fill="#cfd3dc"/>
<path d="M31 16 Q30 8 40 7 Q50 8 49 18 L48 30 Q46 40 40 40 Q32 40 31 30 Z" fill="#d6a889"/>
<path d="M36 40 L36 48 L44 48 L44 40 Z" fill="#c49476"/>
<path d="M30 20 Q28 6 40 5 Q52 6 50 20 Q48 12 40 12 Q32 12 30 20 Z" fill="#151515"/>
<path d="M32 19 L48 19 M33 19 Q33 23 37 23 Q39 23 39 19 M41 19 Q41 23 44 23 Q47 23 47 19" stroke="#2a2a2a" stroke-width="1" fill="none"/>
</svg></div><div class="abs" style="left:3px;top:77.5px;width:141px;height:19.5px;border-radius:6px;background:rgba(50,50,50,0.6)">
<svg class="abs" style="left:2px;top:2.5px" width="15" height="15" viewBox="0 0 15 15">
<rect x="5" y="1.5" width="5.4" height="8" rx="2.7" fill="#e5474c"/>
<path d="M3.6 7.2 Q3.6 11.2 7.7 11.2 Q11.8 11.2 11.8 7.2" stroke="#e5474c" stroke-width="1.1" fill="none"/>
<rect x="4.8" y="12.2" width="6" height="1.4" rx="0.7" fill="#e5474c"/>
<path d="M2 13.6 L13 1.6" stroke="#1c1c1c" stroke-width="2.4"/>
<path d="M2 13.6 L13 1.6" stroke="#e5474c" stroke-width="1.2" stroke-linecap="round"/>
</svg>
<div class="abs nm" style="left:21.5px;top:2px">ASU-CTE John Ma...</div>
</div></div><div class="abs tile" style="left:0px;top:198px"><div class="abs ph" style="background:#0597a7"><div class="abs av">S</div></div><div class="abs" style="left:3px;top:77.5px;width:141px;height:19.5px;border-radius:6px;background:rgba(50,50,50,0.6)">
<svg class="abs" style="left:2px;top:2.5px" width="15" height="15" viewBox="0 0 15 15">
<rect x="5" y="1.5" width="5.4" height="8" rx="2.7" fill="#e5474c"/>
<path d="M3.6 7.2 Q3.6 11.2 7.7 11.2 Q11.8 11.2 11.8 7.2" stroke="#e5474c" stroke-width="1.1" fill="none"/>
<rect x="4.8" y="12.2" width="6" height="1.4" rx="0.7" fill="#e5474c"/>
<path d="M2 13.6 L13 1.6" stroke="#1c1c1c" stroke-width="2.4"/>
<path d="M2 13.6 L13 1.6" stroke="#e5474c" stroke-width="1.2" stroke-linecap="round"/>
</svg>
<div class="abs nm" style="left:21.5px;top:2px">LU_Shella Mae M...</div>
</div></div><div class="abs tile" style="left:176px;top:198px"><div class="abs ph" style="background:#fff"><svg width="79" height="79" viewBox="0 0 79 79">
<rect width="79" height="79" fill="#7ea25e"/>
<path d="M0 0 L27 0 Q20 30 18 79 L0 79 Z" fill="#8c7258"/>
<circle cx="60" cy="12" r="10" fill="#b8cca0" opacity="0.6"/><circle cx="70" cy="50" r="9" fill="#a8c890" opacity="0.6"/>
<path d="M20 20 Q32 30 24 50 Q18 62 20 79 L30 79 Q30 50 36 40 Z" fill="#3f7a35"/>
<path d="M2 79 Q6 60 26 55 L58 54 Q74 58 78 79 Z" fill="#2c2c6a"/>
<path d="M33 18 Q33 8 50 8 Q67 8 67 20 L66 42 Q62 56 50 56 Q36 54 34 42 Z" fill="#c99c82"/>
<path d="M30 24 Q28 4 50 4 Q70 4 69 24 Q64 14 50 14 Q36 14 32 26 Z" fill="#141414"/>
<path d="M35 36 Q50 30 66 36 L65 46 Q60 58 50 58 Q38 56 36 46 Z" fill="#101010"/>
<path d="M38 28 L45 28 M55 28 L62 28" stroke="#3a2a24" stroke-width="1.4"/>
</svg></div><div class="abs" style="left:3px;top:77.5px;width:115px;height:19.5px;border-radius:6px;background:rgba(50,50,50,0.6)">
<svg class="abs" style="left:2px;top:2.5px" width="15" height="15" viewBox="0 0 15 15">
<rect x="5" y="1.5" width="5.4" height="8" rx="2.7" fill="#e5474c"/>
<path d="M3.6 7.2 Q3.6 11.2 7.7 11.2 Q11.8 11.2 11.8 7.2" stroke="#e5474c" stroke-width="1.1" fill="none"/>
<rect x="4.8" y="12.2" width="6" height="1.4" rx="0.7" fill="#e5474c"/>
<path d="M2 13.6 L13 1.6" stroke="#1c1c1c" stroke-width="2.4"/>
<path d="M2 13.6 L13 1.6" stroke="#e5474c" stroke-width="1.2" stroke-linecap="round"/>
</svg>
<div class="abs nm" style="left:21.5px;top:2px">Marvin Francia</div>
</div></div><div class="abs tile" style="left:352px;top:198px"><div class="abs ph" style="background:#fff"><svg width="79" height="79" viewBox="0 0 79 79">
<rect width="79" height="79" fill="#dcdcde"/>
<path d="M5 79 Q8 58 28 50 L50 50 Q64 56 66 79 Z" fill="#9c6a62"/>
<g fill="#c9b08e" opacity="0.85"><circle cx="14" cy="66" r="4"/><circle cx="22" cy="58" r="3"/><circle cx="28" cy="70" r="4"/><circle cx="54" cy="60" r="3.5"/><circle cx="58" cy="72" r="4"/><circle cx="47" cy="66" r="3"/><circle cx="36" cy="76" r="3"/></g>
<path d="M34 48 L40 79 L44 79 L46 48 Z" fill="#9a2336"/>
<path d="M32 24 Q32 16 42 16 Q52 16 52 26 L51 40 Q48 48 42 48 Q34 48 33 40 Z" fill="#c9a086"/>
<path d="M29 26 Q27 12 42 12 Q55 12 54 26 Q50 18 42 19 Q33 20 32 32 Z" fill="#131313"/>
</svg></div><div class="abs" style="left:3px;top:77.5px;width:141px;height:19.5px;border-radius:6px;background:rgba(50,50,50,0.6)">
<svg class="abs" style="left:2px;top:2.5px" width="15" height="15" viewBox="0 0 15 15">
<rect x="5" y="1.5" width="5.4" height="8" rx="2.7" fill="#e5474c"/>
<path d="M3.6 7.2 Q3.6 11.2 7.7 11.2 Q11.8 11.2 11.8 7.2" stroke="#e5474c" stroke-width="1.1" fill="none"/>
<rect x="4.8" y="12.2" width="6" height="1.4" rx="0.7" fill="#e5474c"/>
<path d="M2 13.6 L13 1.6" stroke="#1c1c1c" stroke-width="2.4"/>
<path d="M2 13.6 L13 1.6" stroke="#e5474c" stroke-width="1.2" stroke-linecap="round"/>
</svg>
<div class="abs nm" style="left:21.5px;top:2px">ASU-CAS Emmanu...</div>
</div></div><div class="abs tile" style="left:0px;top:297px"><div class="abs bn">Ersyl Biray</div><div class="abs" style="left:3px;top:77.5px;width:83px;height:19.5px;border-radius:6px;background:rgba(50,50,50,0.6)">
<svg class="abs" style="left:2px;top:2.5px" width="15" height="15" viewBox="0 0 15 15">
<rect x="5" y="1.5" width="5.4" height="8" rx="2.7" fill="#e5474c"/>
<path d="M3.6 7.2 Q3.6 11.2 7.7 11.2 Q11.8 11.2 11.8 7.2" stroke="#e5474c" stroke-width="1.1" fill="none"/>
<rect x="4.8" y="12.2" width="6" height="1.4" rx="0.7" fill="#e5474c"/>
<path d="M2 13.6 L13 1.6" stroke="#1c1c1c" stroke-width="2.4"/>
<path d="M2 13.6 L13 1.6" stroke="#e5474c" stroke-width="1.2" stroke-linecap="round"/>
</svg>
<div class="abs nm" style="left:21.5px;top:2px">Ersyl Biray</div>
</div></div><div class="abs tile" style="left:176px;top:297px"><div class="abs ph" style="background:#024f40"><div class="abs av">G</div></div><div class="abs" style="left:3px;top:77.5px;width:122px;height:19.5px;border-radius:6px;background:rgba(50,50,50,0.6)">
<svg class="abs" style="left:2px;top:2.5px" width="15" height="15" viewBox="0 0 15 15">
<rect x="5" y="1.5" width="5.4" height="8" rx="2.7" fill="#e5474c"/>
<path d="M3.6 7.2 Q3.6 11.2 7.7 11.2 Q11.8 11.2 11.8 7.2" stroke="#e5474c" stroke-width="1.1" fill="none"/>
<rect x="4.8" y="12.2" width="6" height="1.4" rx="0.7" fill="#e5474c"/>
<path d="M2 13.6 L13 1.6" stroke="#1c1c1c" stroke-width="2.4"/>
<path d="M2 13.6 L13 1.6" stroke="#e5474c" stroke-width="1.2" stroke-linecap="round"/>
</svg>
<div class="abs nm" style="left:21.5px;top:2px">Grachiel Ancheta</div>
</div></div><div class="abs tile" style="left:352px;top:297px"><div class="abs bn">Leo Janry T. Tu...</div><div class="abs" style="left:3px;top:77.5px;width:139px;height:19.5px;border-radius:6px;background:rgba(50,50,50,0.6)">
<svg class="abs" style="left:2px;top:2.5px" width="15" height="15" viewBox="0 0 15 15">
<rect x="5" y="1.5" width="5.4" height="8" rx="2.7" fill="#e5474c"/>
<path d="M3.6 7.2 Q3.6 11.2 7.7 11.2 Q11.8 11.2 11.8 7.2" stroke="#e5474c" stroke-width="1.1" fill="none"/>
<rect x="4.8" y="12.2" width="6" height="1.4" rx="0.7" fill="#e5474c"/>
<path d="M2 13.6 L13 1.6" stroke="#1c1c1c" stroke-width="2.4"/>
<path d="M2 13.6 L13 1.6" stroke="#e5474c" stroke-width="1.2" stroke-linecap="round"/>
</svg>
<div class="abs nm" style="left:21.5px;top:2px">Leo Janry T. Tumb...</div>
</div></div><div class="abs tile" style="left:0px;top:396px"><div class="abs bn">Morlan Pasia</div><div class="abs" style="left:3px;top:77.5px;width:95px;height:19.5px;border-radius:6px;background:rgba(50,50,50,0.6)">
<svg class="abs" style="left:2px;top:2.5px" width="15" height="15" viewBox="0 0 15 15">
<rect x="5" y="1.5" width="5.4" height="8" rx="2.7" fill="#e5474c"/>
<path d="M3.6 7.2 Q3.6 11.2 7.7 11.2 Q11.8 11.2 11.8 7.2" stroke="#e5474c" stroke-width="1.1" fill="none"/>
<rect x="4.8" y="12.2" width="6" height="1.4" rx="0.7" fill="#e5474c"/>
<path d="M2 13.6 L13 1.6" stroke="#1c1c1c" stroke-width="2.4"/>
<path d="M2 13.6 L13 1.6" stroke="#e5474c" stroke-width="1.2" stroke-linecap="round"/>
</svg>
<div class="abs nm" style="left:21.5px;top:2px">Morlan Pasia</div>
</div></div><div class="abs tile" style="left:176px;top:396px"><div class="abs ph" style="background:#fff"><svg width="79" height="79" viewBox="0 0 79 79">
<defs><linearGradient id="ga" x1="0" y1="0" x2="0" y2="1"><stop offset="0" stop-color="#176856"/><stop offset="1" stop-color="#0f5a48"/></linearGradient></defs>
<rect width="79" height="79" fill="url(#ga)"/>
<path d="M19 34 Q19 8 40 8 Q60 8 61 34 L60 66 L20 66 Z" fill="#151313"/>
<path d="M0 79 Q4 66 22 60 L58 60 Q76 64 79 79 Z" fill="#e6e6ea"/>
<path d="M26 28 Q26 16 40 16 Q55 16 56 30 L56 46 Q54 58 40 60 Q27 58 25 46 Z" fill="#c99b80"/>
<path d="M25 34 Q25 12 40 12 Q55 12 55 34 Q52 20 40 18 Q28 20 25 34 Z" fill="#151313"/>
<path d="M35 50 Q40 48 46 50 Q40 54 35 50 Z" fill="#9a4a4e"/>
<path d="M31 36 L37 36 M44 36 L50 36" stroke="#3a2a24" stroke-width="1.5"/>
</svg></div><div class="abs" style="left:3px;top:77.5px;width:141px;height:19.5px;border-radius:6px;background:rgba(50,50,50,0.6)">
<svg class="abs" style="left:2px;top:2.5px" width="15" height="15" viewBox="0 0 15 15">
<rect x="5" y="1.5" width="5.4" height="8" rx="2.7" fill="#e5474c"/>
<path d="M3.6 7.2 Q3.6 11.2 7.7 11.2 Q11.8 11.2 11.8 7.2" stroke="#e5474c" stroke-width="1.1" fill="none"/>
<rect x="4.8" y="12.2" width="6" height="1.4" rx="0.7" fill="#e5474c"/>
<path d="M2 13.6 L13 1.6" stroke="#1c1c1c" stroke-width="2.4"/>
<path d="M2 13.6 L13 1.6" stroke="#e5474c" stroke-width="1.2" stroke-linecap="round"/>
</svg>
<div class="abs nm" style="left:21.5px;top:2px">LU_ADIZAS_MA. L...</div>
</div></div><div class="abs tile" style="left:352px;top:396px"><div class="abs bn">LU-BEED&nbsp; Joana...</div><div class="abs" style="left:3px;top:77.5px;width:139px;height:19.5px;border-radius:6px;background:rgba(50,50,50,0.6)">
<svg class="abs" style="left:2px;top:2.5px" width="15" height="15" viewBox="0 0 15 15">
<rect x="5" y="1.5" width="5.4" height="8" rx="2.7" fill="#e5474c"/>
<path d="M3.6 7.2 Q3.6 11.2 7.7 11.2 Q11.8 11.2 11.8 7.2" stroke="#e5474c" stroke-width="1.1" fill="none"/>
<rect x="4.8" y="12.2" width="6" height="1.4" rx="0.7" fill="#e5474c"/>
<path d="M2 13.6 L13 1.6" stroke="#1c1c1c" stroke-width="2.4"/>
<path d="M2 13.6 L13 1.6" stroke="#e5474c" stroke-width="1.2" stroke-linecap="round"/>
</svg>
<div class="abs nm" style="left:21.5px;top:2px">LU-BEED Joana Ol...</div>
</div></div><div class="abs tile" style="left:0px;top:495px"><div class="abs ph" style="background:#fff"><svg width="79" height="79" viewBox="0 0 79 79">
<rect width="79" height="79" fill="#8f8080"/>
<circle cx="20" cy="20" r="18" fill="#a89090" opacity="0.7"/><circle cx="62" cy="40" r="20" fill="#6a7070" opacity="0.6"/><circle cx="15" cy="60" r="14" fill="#6c6868" opacity="0.6"/>
<path d="M36 79 Q46 56 62 52 Q76 56 79 72 L79 79 Z" fill="#f1a91c"/>
<path d="M14 40 Q12 20 36 18 Q58 18 60 40 L62 79 L18 79 Z" fill="#5a3b2b"/>
<path d="M28 32 Q28 20 39 20 Q50 20 50 32 L50 42 Q48 52 39 54 Q30 52 28 42 Z" fill="#ead4c4"/>
<path d="M34 45 Q39 48 44 45" stroke="#c05a5a" stroke-width="1.5" fill="none"/>
<path d="M12 22 Q28 6 58 8 Q60 16 50 22 Q30 24 18 34 Z" fill="#f0b020"/>
<path d="M14 30 L12 52 L16 52 L18 32 Z" fill="#f0b020"/>
</svg></div><div class="abs" style="left:3px;top:77.5px;width:141px;height:19.5px;border-radius:6px;background:rgba(50,50,50,0.6)">
<svg class="abs" style="left:2px;top:2.5px" width="15" height="15" viewBox="0 0 15 15">
<rect x="5" y="1.5" width="5.4" height="8" rx="2.7" fill="#e5474c"/>
<path d="M3.6 7.2 Q3.6 11.2 7.7 11.2 Q11.8 11.2 11.8 7.2" stroke="#e5474c" stroke-width="1.1" fill="none"/>
<rect x="4.8" y="12.2" width="6" height="1.4" rx="0.7" fill="#e5474c"/>
<path d="M2 13.6 L13 1.6" stroke="#1c1c1c" stroke-width="2.4"/>
<path d="M2 13.6 L13 1.6" stroke="#e5474c" stroke-width="1.2" stroke-linecap="round"/>
</svg>
<div class="abs nm" style="left:21.5px;top:2px">FAITH JOANGELIC...</div>
</div></div><div class="abs tile" style="left:176px;top:495px"><div class="abs bn">LU_Andrei&nbsp; Anda...</div><div class="abs" style="left:3px;top:77.5px;width:141px;height:19.5px;border-radius:6px;background:rgba(50,50,50,0.6)">
<svg class="abs" style="left:2px;top:2.5px" width="15" height="15" viewBox="0 0 15 15">
<rect x="5" y="1.5" width="5.4" height="8" rx="2.7" fill="#e5474c"/>
<path d="M3.6 7.2 Q3.6 11.2 7.7 11.2 Q11.8 11.2 11.8 7.2" stroke="#e5474c" stroke-width="1.1" fill="none"/>
<rect x="4.8" y="12.2" width="6" height="1.4" rx="0.7" fill="#e5474c"/>
<path d="M2 13.6 L13 1.6" stroke="#1c1c1c" stroke-width="2.4"/>
<path d="M2 13.6 L13 1.6" stroke="#e5474c" stroke-width="1.2" stroke-linecap="round"/>
</svg>
<div class="abs nm" style="left:21.5px;top:2px">LU_Andrei Andaya...</div>
</div></div><div class="abs tile" style="left:352px;top:495px"><div class="abs ph" style="background:#fff"><svg width="79" height="79" viewBox="0 0 79 79">
<rect width="79" height="79" fill="#e9bfa6"/>
<rect x="7.5" y="1" width="64" height="78" fill="#a8a09c"/>
<path d="M7.5 1 L40 1 L7.5 50 Z" fill="#bdb6b2" opacity="0.6"/>
<path d="M46 20 L64 10 L71 14 L71 36 L56 42 Z" fill="#3a2420"/>
<path d="M50 22 L64 15 L67 17 L67 32 L57 36 Z" fill="#cfc8c2"/>
<path d="M7.5 79 L8 60 Q12 40 30 34 Q44 30 50 36 L40 50 L30 79 Z" fill="#4a2e26"/>
<path d="M36 40 Q46 30 56 34 Q66 40 64 56 Q62 70 48 72 Q32 72 28 60 Q26 48 36 40 Z" fill="#dcae96"/>
<path d="M28 79 Q30 70 48 72 L60 79 Z" fill="#5a3a30"/>
<path d="M44 64 Q50 66 55 62" stroke="#b05a50" stroke-width="1.2" fill="none"/>
<path d="M40 50 L46 48 M52 54 L57 52" stroke="#3a2a24" stroke-width="1.3"/>
</svg></div><div class="abs" style="left:3px;top:77.5px;width:139px;height:19.5px;border-radius:6px;background:rgba(50,50,50,0.6)">
<svg class="abs" style="left:2px;top:2.5px" width="15" height="15" viewBox="0 0 15 15">
<rect x="5" y="1.5" width="5.4" height="8" rx="2.7" fill="#e5474c"/>
<path d="M3.6 7.2 Q3.6 11.2 7.7 11.2 Q11.8 11.2 11.8 7.2" stroke="#e5474c" stroke-width="1.1" fill="none"/>
<rect x="4.8" y="12.2" width="6" height="1.4" rx="0.7" fill="#e5474c"/>
<path d="M2 13.6 L13 1.6" stroke="#1c1c1c" stroke-width="2.4"/>
<path d="M2 13.6 L13 1.6" stroke="#e5474c" stroke-width="1.2" stroke-linecap="round"/>
</svg>
<div class="abs nm" style="left:21.5px;top:2px">LU_Anne Cristelle ...</div>
</div></div><svg class="abs" style="left:512px;top:288px" width="12" height="20" viewBox="0 0 12 20"><path d="M3 3 L9 10 L3 17" stroke="#e8e8e8" stroke-width="1.8" fill="none"/></svg></div><!--/grid-->
<div id="bar" class="abs">
<!-- audio -->
<svg class="abs" style="left:36px;top:8px" width="32" height="30" viewBox="0 0 32 30">
<rect x="12" y="2.8" width="8" height="14.6" rx="4" stroke="#f4f4f4" stroke-width="1.5" fill="none"/>
<path d="M9 12.5 Q9 20.3 16 20.3 Q23 20.3 23 12.5" stroke="#f4f4f4" stroke-width="1.5" fill="none"/>
<path d="M16 20.3 L16 25.3 M12 25.5 L20 25.5" stroke="#f4f4f4" stroke-width="1.5" fill="none"/>
<path d="M4.6 25.6 L27.7 2.8" stroke="#000" stroke-width="4.6" stroke-linecap="round"/>
<path d="M4.6 25.6 L27.7 2.8" stroke="#f5145a" stroke-width="2.6" stroke-linecap="round"/>
</svg>
<svg class="abs" style="left:79px;top:18px" width="11" height="7" viewBox="0 0 11 7"><path d="M2 5 L5.5 2 L9 5" stroke="#bdbdbd" stroke-width="1.2" fill="none"/></svg>
<div class="abs lbl" style="left:36px">Audio</div>
<!-- video -->
<svg class="abs" style="left:128px;top:8px" width="32" height="30" viewBox="0 0 32 30">
<rect x="5.6" y="7.4" width="15.4" height="14" rx="2.4" stroke="#f4f4f4" stroke-width="1.55" fill="none"/>
<path d="M21.5 12.5 L28.6 7.6 L28.6 21.2 L21.5 16.4" stroke="#f4f4f4" stroke-width="1.55" fill="none" stroke-linejoin="round"/>
<path d="M5.5 25 L28.5 2.6" stroke="#000" stroke-width="4.6" stroke-linecap="round"/>
<path d="M5.5 25 L28.5 2.6" stroke="#f5145a" stroke-width="2.6" stroke-linecap="round"/>
</svg>
<svg class="abs" style="left:177px;top:18px" width="11" height="7" viewBox="0 0 11 7"><path d="M2 5 L5.5 2 L9 5" stroke="#bdbdbd" stroke-width="1.2" fill="none"/></svg>
<div class="abs lbl" style="left:129px">Video</div>
<!-- participants -->
<svg class="abs" style="left:734px;top:11px" width="24" height="22" viewBox="0 0 24 22">
<circle cx="7.8" cy="5.8" r="2.6" stroke="#f4f4f4" stroke-width="1.55" fill="none"/>
<circle cx="15.8" cy="9.7" r="2.4" stroke="#f4f4f4" stroke-width="1.55" fill="none"/>
<path d="M10.5 19.5 L5.5 19.5 Q3.3 19.5 3.3 16.5 Q3.3 12.5 8 12.5 Q9.3 12.5 10.3 12.9" stroke="#f4f4f4" stroke-width="1.55" fill="none"/>
<rect x="9.8" y="14.6" width="11.6" height="5" rx="2.5" stroke="#f4f4f4" stroke-width="1.55" fill="none"/>
</svg>
<div class="abs" style="left:762px;top:13px;font:12px/14px 'Liberation Sans',sans-serif;color:#d8d8d8">40</div>
<div class="abs lbl" style="left:715px">Participants</div>
<!-- chat -->
<svg class="abs" style="left:842px;top:9px" width="28" height="26" viewBox="0 0 28 26">
<path d="M8.5 5 Q9.5 2.6 13 2.6 L19.5 2.6 Q24 2.6 24 7 L24 12 Q24 15 21.5 16" stroke="#f4f4f4" stroke-width="1.55" fill="none"/>
<path d="M7 7.5 L16 7.5 Q21 7.5 21 12 L21 15.5 Q21 20 16.5 20 L12 20 L7.5 23.2 L8.2 20 Q3.2 19.5 3.2 15.5 L3.2 12 Q3.2 7.5 7 7.5 Z" stroke="#f4f4f4" stroke-width="1.55" fill="none" stroke-linejoin="round"/>
<circle cx="8.2" cy="13.8" r="1" fill="#f4f4f4"/><circle cx="12" cy="13.8" r="1" fill="#f4f4f4"/><circle cx="15.8" cy="13.8" r="1" fill="#f4f4f4"/>
</svg>
<svg class="abs" style="left:883px;top:18px" width="11" height="7" viewBox="0 0 11 7"><path d="M2 5 L5.5 2 L9 5" stroke="#bdbdbd" stroke-width="1.2" fill="none"/></svg>
<div class="abs lbl" style="left:844px">Chat</div>
<!-- react -->
<svg class="abs" style="left:926px;top:9px" width="30" height="26" viewBox="0 0 30 26">
<path d="M11.5 23 L22.5 17.5 Q28 14 25.5 8 Q23 3.5 17.5 6 Q15 1.2 9.5 2.8 Q4 4.6 5 10.5 Q6 14.5 11.5 23 Z" stroke="#f4f4f4" stroke-width="1.55" fill="none" stroke-linejoin="round"/>
</svg>
<svg class="abs" style="left:963px;top:18px" width="11" height="7" viewBox="0 0 11 7"><path d="M2 5 L5.5 2 L9 5" stroke="#bdbdbd" stroke-width="1.2" fill="none"/></svg>
<div class="abs lbl" style="left:926px">React</div>
<!-- share -->
<div class="abs" style="left:1018px;top:12px;width:24px;height:20px;background:#0fe58d;border-radius:2.5px"></div>
<svg class="abs" style="left:1018px;top:12px" width="24" height="20" viewBox="0 0 24 20"><path d="M12 16 L12 8.5" stroke="#000" stroke-width="2.6" fill="none"/><path d="M6.8 10.6 L12 5 L17.2 10.6 Z" fill="#000"/></svg>
<div class="abs lbl" style="left:1015px">Share</div>
<!-- apps -->
<svg class="abs" style="left:1105px;top:9px" width="28" height="26" viewBox="0 0 28 26">
<path d="M4 12 L4 8 Q4 3.5 8.5 3.5 L12 3.5" stroke="#f4f4f4" stroke-width="1.4" fill="none"/>
<path d="M24 14 L24 18 Q24 22.5 19.5 22.5 L16 22.5" stroke="#f4f4f4" stroke-width="1.4" fill="none"/>
<circle cx="20.5" cy="6.5" r="3" stroke="#f4f4f4" stroke-width="1.4" fill="none"/>
<circle cx="7.5" cy="19.5" r="3" stroke="#f4f4f4" stroke-width="1.4" fill="none"/>
</svg>
<div class="abs lbl" style="left:1105px">Apps</div>
<!-- breakout -->
<div class="abs" style="left:1197px;top:10px;width:11px;height:11px;background:#f4f4f4;border-radius:1.5px"></div>
<div class="abs" style="left:1210px;top:10px;width:11px;height:11px;background:#f4f4f4;border-radius:1.5px"></div>
<div class="abs" style="left:1197px;top:23px;width:11px;height:11px;background:#f4f4f4;border-radius:1.5px"></div>
<div class="abs" style="left:1210px;top:23px;width:11px;height:11px;background:#f4f4f4;border-radius:1.5px"></div>
<div class="abs lbl" style="left:1167px">Breakout rooms</div>
<!-- more -->
<svg class="abs" style="left:1287px;top:8px" width="28" height="28" viewBox="0 0 28 28"><circle cx="14" cy="14" r="11.6" stroke="#f4f4f4" stroke-width="1.55" fill="none"/><circle cx="8" cy="14" r="1.3" fill="#f4f4f4"/><circle cx="14" cy="14" r="1.3" fill="#f4f4f4"/><circle cx="20" cy="14" r="1.3" fill="#f4f4f4"/></svg>
<div class="abs lbl" style="left:1287px">More</div>
<!-- leave -->
<svg class="abs" style="left:1858px;top:5px" width="28" height="28" viewBox="0 0 28 28">
<path d="M11 5.4 L26 5.4 L26 23.2 L19.2 27.5 L19.2 9.6 L26 5.4" stroke="#ff0f5a" stroke-width="1.5" fill="none" stroke-linejoin="round"/>
<circle cx="11.2" cy="10.3" r="3.1" stroke="#f4f4f4" stroke-width="1.55" fill="none"/>
<path d="M8.5 14.3 Q5 15.2 4 17.8 Q4.4 19.2 6.3 18.3 L7.2 17.4 L7.5 20.2 L4.6 25.8 Q4.4 27.6 6.6 27.2 L9.2 23 L11.2 27 Q12.8 28.2 13.8 26.6 L12.3 21.2 L12.2 17.2 Q13.8 19.4 15.8 18.8 Q16.6 17.6 14.8 16 Q12.2 13.6 8.5 14.3 Z" stroke="#f4f4f4" stroke-width="1.5" fill="none" stroke-linejoin="round"/>
</svg>
<div class="abs lbl" style="left:1841px">Leave room</div>
</div>
</body></html>
